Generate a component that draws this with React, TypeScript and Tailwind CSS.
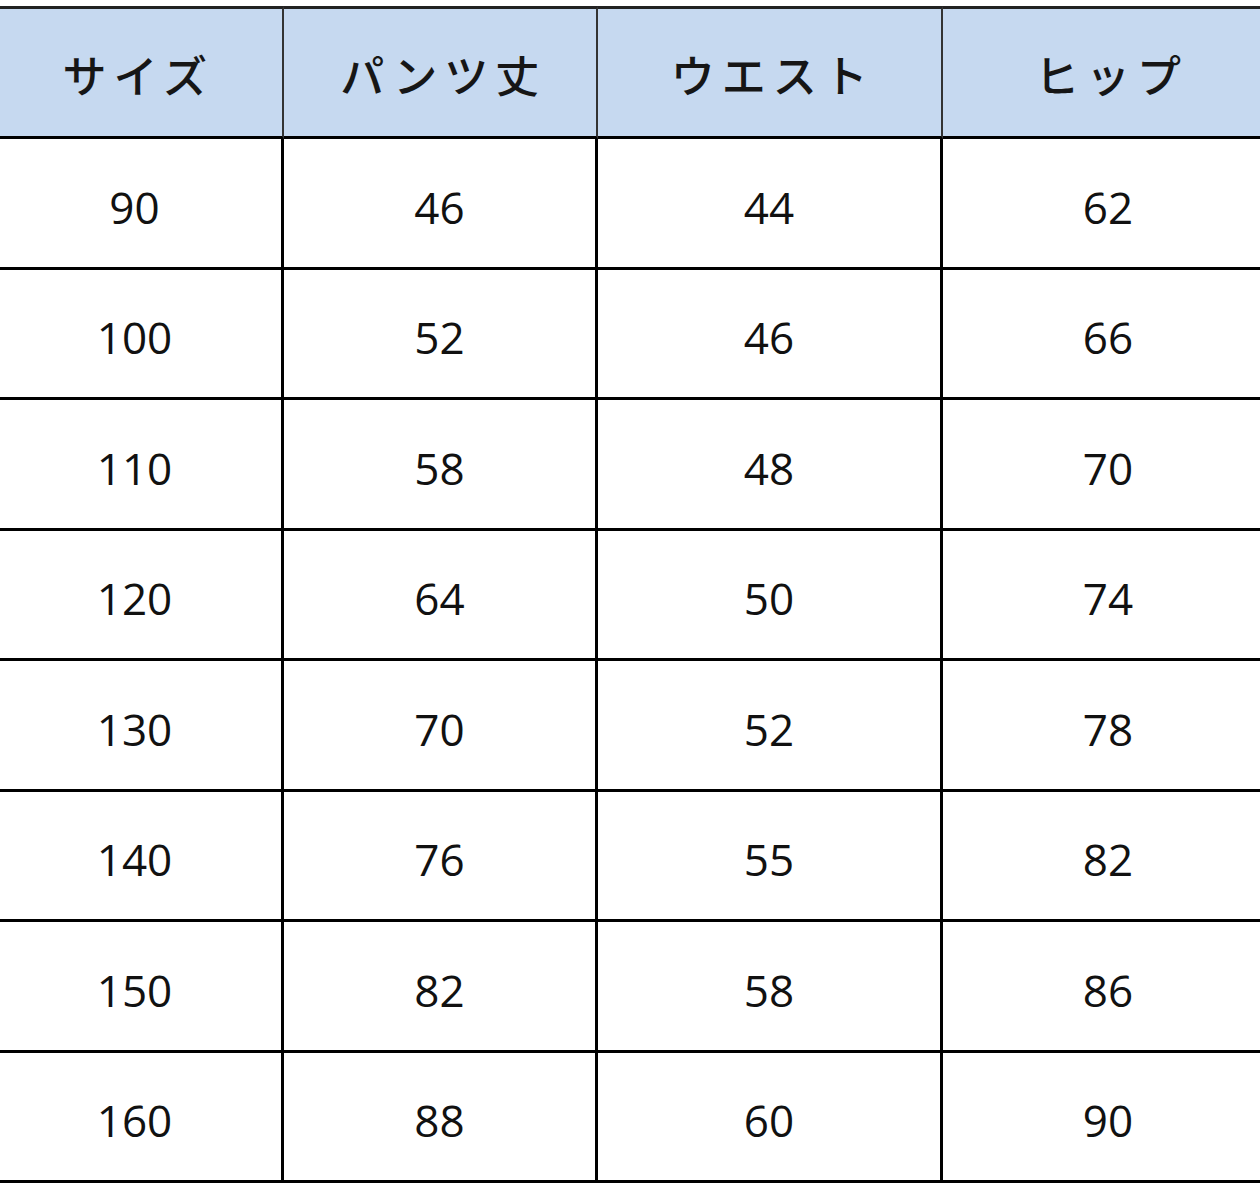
const headers = ["サイズ", "パンツ丈", "ウエスト", "ヒップ"];

const rows = [
  ["90", "46", "44", "62"],
  ["100", "52", "46", "66"],
  ["110", "58", "48", "70"],
  ["120", "64", "50", "74"],
  ["130", "70", "52", "78"],
  ["140", "76", "55", "82"],
  ["150", "82", "58", "86"],
  ["160", "88", "60", "90"],
];

const App = () => {
  return (
    <div className="w-[1260px] h-[1189px] overflow-hidden bg-white pt-[6px]">
      <div className="ml-[-12px] w-[1292px] grid grid-cols-[296px_314px_345px_330px] grid-rows-[133px_repeat(8,130.5px)]">
        {headers.map((label, i) => (
          <div
            key={label}
            className={`flex items-center justify-center bg-[#c6d9f0] border-t-[3px] border-b-[3px] border-t-[#222] border-b-black ${i < 3 ? "border-r-2 border-r-[#333] mr-[0.5px]" : ""}`}
          >
            <span className="pl-[7px] pt-[2px] text-[44px] tracking-[7px] font-medium text-[#161616] leading-none font-['Noto_Sans_CJK_JP',serif]">
              {label}
            </span>
          </div>
        ))}
        {rows.map((row, r) =>
          row.map((value, c) => (
            <div
              key={`${r}-${c}`}
              className={`flex items-center justify-center pt-[8px] border-b-[3px] border-black ${c < 3 ? "border-r-[3px]" : ""}`}
            >
              <span className="text-[44px] leading-none text-[#111] font-['Open_Sans',sans-serif]">
                {value}
              </span>
            </div>
          ))
        )}
      </div>
    </div>
  );
};

export default App;
